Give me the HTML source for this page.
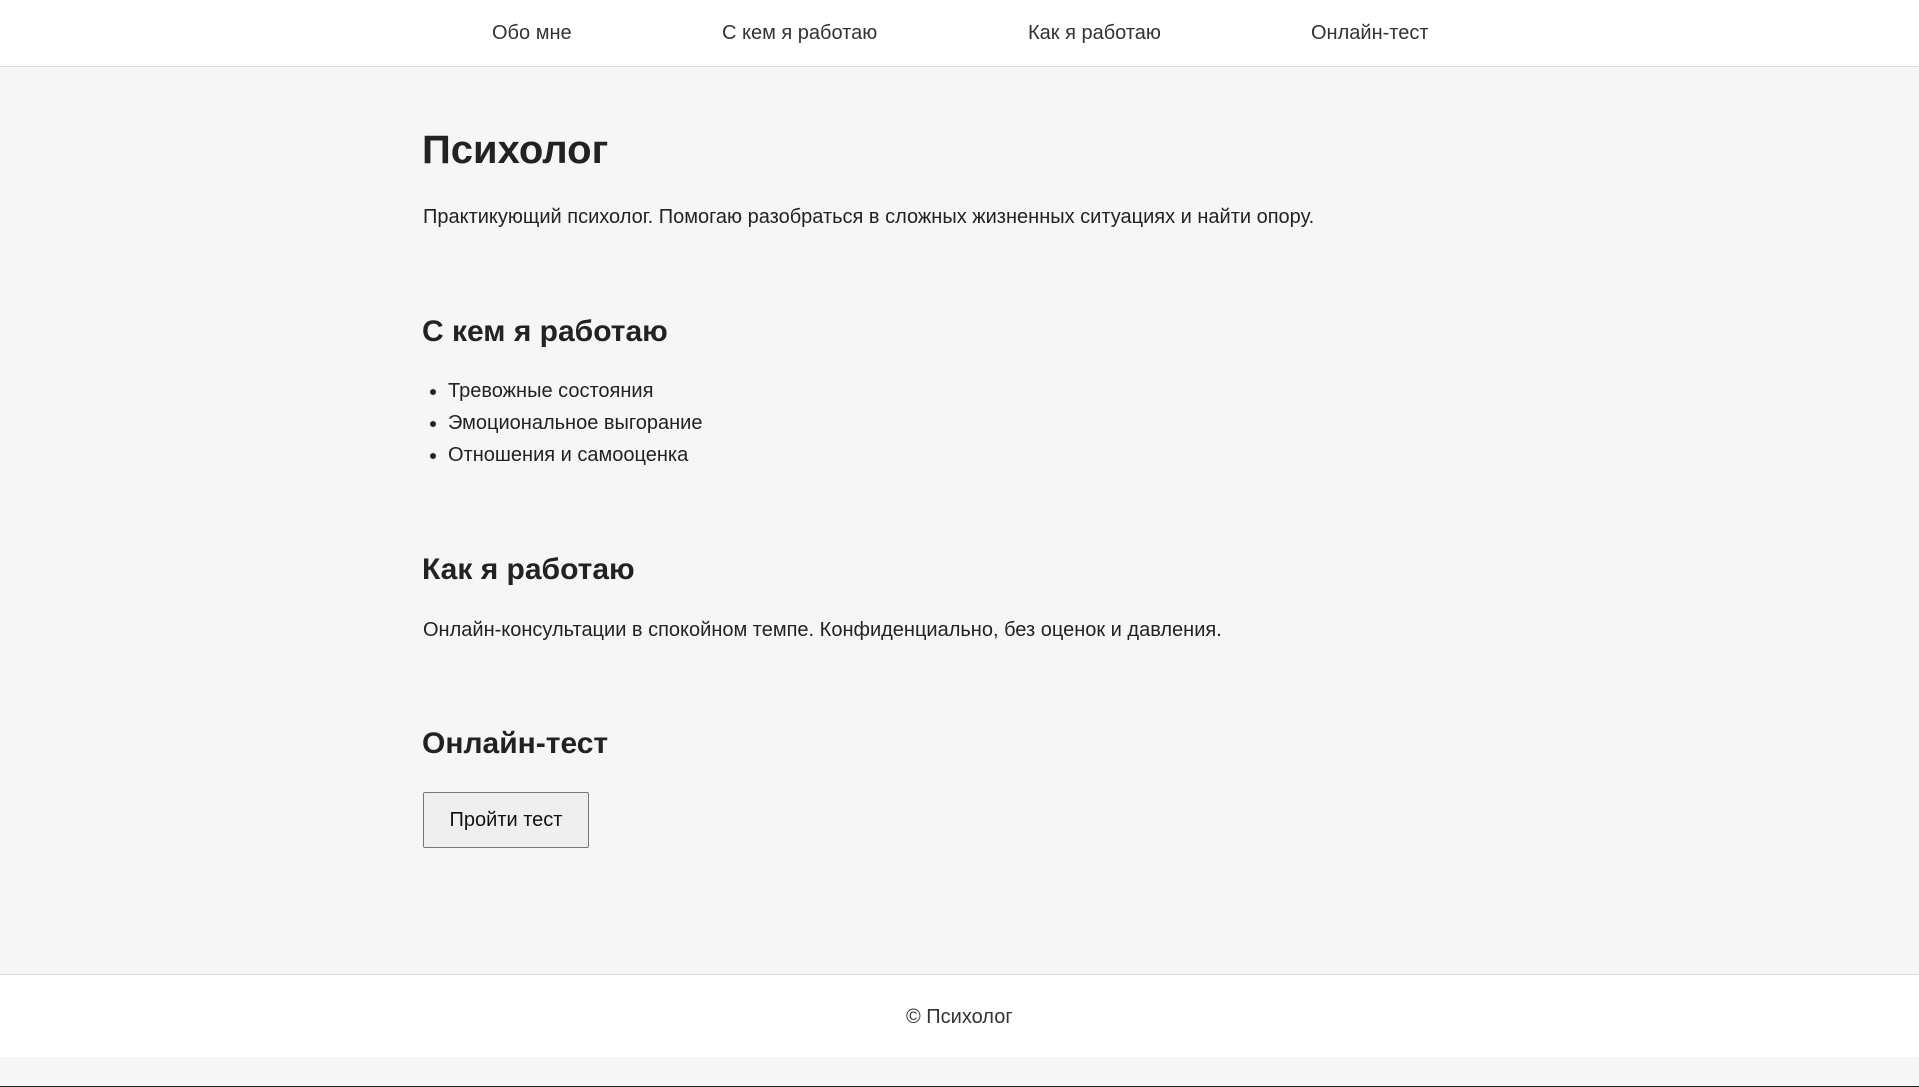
<!DOCTYPE html>
<html><head><meta charset="utf-8"><style>
*{margin:0;padding:0;box-sizing:border-box}
html,body{width:1919px;height:1087px;overflow:hidden}
body{background:#f6f6f6;font-family:"Liberation Sans",Arial,sans-serif;color:#222;position:relative}
.a{position:absolute;white-space:nowrap;line-height:1}
nav{position:absolute;left:0;top:0;width:1919px;height:67px;background:#fff;border-bottom:1px solid #ddd}
nav span{position:absolute;top:23px;font-size:20px;color:#333;line-height:1}
h1{font-size:40px;font-weight:bold}
h2{font-size:30px;font-weight:bold}
.t{font-size:20px}
.b{position:absolute;width:6px;height:6px;border-radius:50%;background:#222;left:430px}
.btn{position:absolute;left:423px;top:792px;width:166px;height:56px;background:#efefef;border:1px solid #767676;border-radius:2px;font-size:20px;color:#111;text-align:center;line-height:54px}
footer{position:absolute;left:0;top:974px;width:1919px;height:83px;background:#fff;border-top:1px solid #ddd}
.bot{position:absolute;left:0;top:1086px;width:1919px;height:1px;background:#222}
</style></head><body>
<nav>
<span style="left:492px">Обо мне</span>
<span style="left:722px">С кем я работаю</span>
<span style="left:1028px">Как я работаю</span>
<span style="left:1311px">Онлайн-тест</span>
</nav>
<h1 class="a" style="left:422px;top:130px">Психолог</h1>
<p class="a t" style="left:423px;top:207px">Практикующий психолог. Помогаю разобраться в сложных жизненных ситуациях и найти опору.</p>
<h2 class="a" style="left:422px;top:317px">С кем я работаю</h2>
<div class="b" style="top:389px"></div><p class="a t" style="left:448px;top:381px">Тревожные состояния</p>
<div class="b" style="top:421px"></div><p class="a t" style="left:448px;top:413px">Эмоциональное выгорание</p>
<div class="b" style="top:453px"></div><p class="a t" style="left:448px;top:445px">Отношения и самооценка</p>
<h2 class="a" style="left:422px;top:555px">Как я работаю</h2>
<p class="a t" style="left:423px;top:620px">Онлайн-консультации в спокойном темпе. Конфиденциально, без оценок и давления.</p>
<h2 class="a" style="left:422px;top:729px">Онлайн-тест</h2>
<div class="btn">Пройти тест</div>
<footer><span class="a t" style="left:906px;top:32px;color:#333">© Психолог</span></footer>
<div class="bot"></div>
</body></html>
